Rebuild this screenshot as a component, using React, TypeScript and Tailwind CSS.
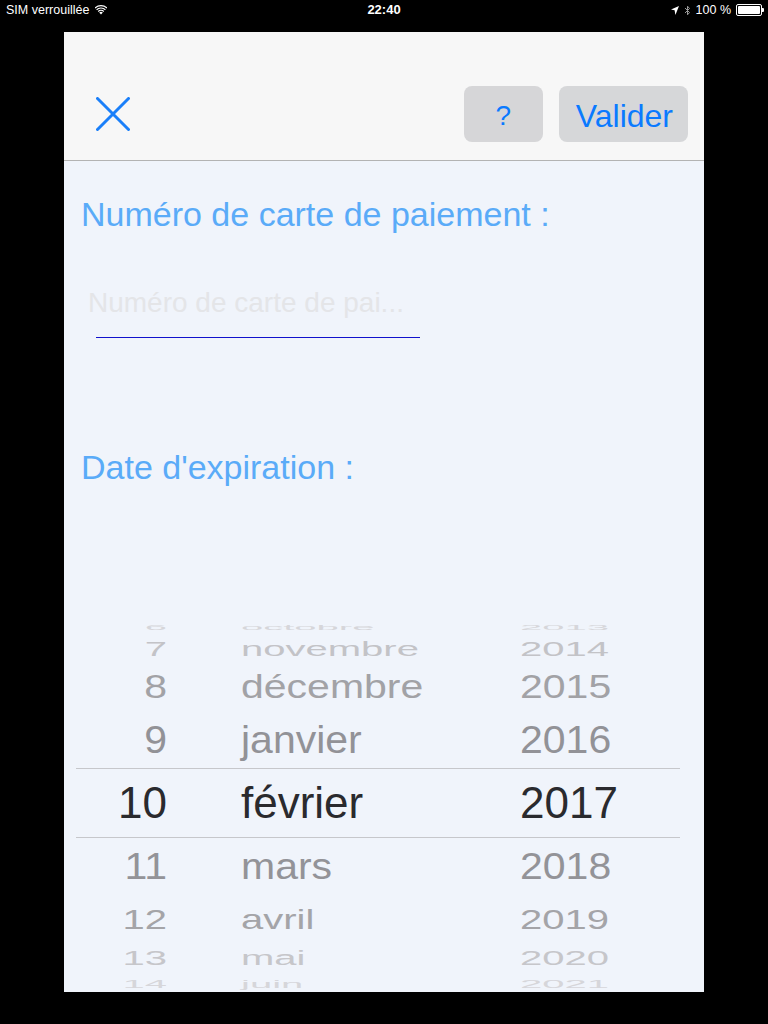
import React from 'react';

type Row = {
  day: string;
  month: string;
  year: string;
  box: string;
  inner: string;
};

// picker wheel rows, squashed towards the edges like the iOS drum
const rows: Row[] = [
  { day: '6', month: 'octobre', year: '2013', box: 'h-[14px]', inner: 'scale-y-[.17] text-[40px] text-[#d6d6da]' },
  { day: '7', month: 'novembre', year: '2014', box: 'h-[27px]', inner: 'scale-y-[.5] text-[40px] text-[#c3c3c7]' },
  { day: '8', month: 'décembre', year: '2015', box: 'h-[50px]', inner: 'scale-y-[.8] text-[41px] text-[#a2a2a6]' },
  { day: '9', month: 'janvier', year: '2016', box: 'h-[56px]', inner: 'scale-y-[.96] text-[41px] text-[#929297]' },
  { day: '10', month: 'février', year: '2017', box: 'h-[70px] border-y border-[#c6c7cb]', inner: 'text-[44px] text-[#2a2a2e]' },
  { day: '11', month: 'mars', year: '2018', box: 'h-[57px]', inner: 'scale-y-[.9] text-[41px] text-[#939398]' },
  { day: '12', month: 'avril', year: '2019', box: 'h-[48px]', inner: 'scale-y-[.7] text-[40px] text-[#a4a4a8]' },
  { day: '13', month: 'mai', year: '2020', box: 'h-[29px]', inner: 'scale-y-[.52] text-[40px] text-[#c6c6ca]' },
  { day: '14', month: 'juin', year: '2021', box: 'h-[24px]', inner: 'scale-y-[.25] text-[40px] text-[#d6d6da]' },
];

const StatusBar: React.FC = () => (
  <div className="h-[20px] shrink-0 flex items-center justify-between pl-[6px] pr-[4px] text-white text-[12.5px] font-['Liberation_Sans',sans-serif] relative">
    <div className="flex items-center gap-[6px]">
      <span>SIM verrouillée</span>
      <svg width="12" height="10" viewBox="0 0 12 10" fill="white">
        <path d="M6 9.5 L4.2 7.5 A2.6 2.6 0 0 1 7.8 7.5 Z" />
        <path d="M2.8 6 A4.6 4.6 0 0 1 9.2 6 L8.4 6.9 A3.4 3.4 0 0 0 3.6 6.9 Z" />
        <path d="M1.2 4.3 A7 7 0 0 1 10.8 4.3 L10 5.2 A5.8 5.8 0 0 0 2 5.2 Z" />
        <path d="M-0.4 2.6 A9.3 9.3 0 0 1 12.4 2.6 L11.6 3.5 A8.1 8.1 0 0 0 0.4 3.5 Z" />
      </svg>
    </div>
    <span className="absolute left-1/2 -translate-x-1/2 font-bold text-[13px]">22:40</span>
    <div className="flex items-center gap-[5px]">
      <svg width="8" height="9" viewBox="0 0 8 9" fill="white">
        <path d="M8 0 L0 3.6 L3.6 4.2 L4.4 9 Z" />
      </svg>
      <svg width="7" height="11" viewBox="0 0 7 11" fill="none" stroke="#9a9a9a" strokeWidth="1">
        <path d="M1 3 L5.5 7.5 L3.5 9.8 L3.5 1.2 L5.5 3.5 L1 8" />
      </svg>
      <span>100 %</span>
      <div className="flex items-center">
        <div className="w-[26px] h-[12px] border border-white rounded-[2px] p-[1px]">
          <div className="w-full h-full bg-white rounded-[1px]" />
        </div>
        <div className="w-[2px] h-[4px] bg-white rounded-r-[1px]" />
      </div>
    </div>
  </div>
);

export default function App() {
  return (
    <div className="w-[768px] h-[1024px] bg-black overflow-hidden font-['Liberation_Sans',sans-serif]">
      <StatusBar />
      <div className="mt-[12px] mx-[64px] h-[960px] flex flex-col overflow-hidden bg-[#f0f4fb]">
        {/* header */}
        <div className="h-[129px] shrink-0 bg-[#f7f7f7] border-b border-[#b3b3b3] pt-[54px] pl-[32px] pr-[16px]">
          <div className="h-[56px] flex items-center justify-between">
            <svg width="34" height="34" viewBox="0 0 34 34" stroke="#1a7ff9" strokeWidth="3" strokeLinecap="round">
              <path d="M1.5 1.5 L32.5 32.5 M32.5 1.5 L1.5 32.5" />
            </svg>
            <div className="flex items-center gap-[16px] h-full">
              <button className="w-[79px] h-full rounded-[8px] bg-[#d6d6d8] text-[#0a7aff] text-[28px] leading-none pt-[3px]">
                ?
              </button>
              <button className="h-full rounded-[8px] bg-[#d6d7d9] text-[#0a7aff] text-[32px] leading-none pl-[17px] pr-[15px] pt-[3px]">
                Valider
              </button>
            </div>
          </div>
        </div>

        {/* body */}
        <div className="flex-1 min-h-0 flex flex-col">
          <p className="shrink-0 mt-[36px] ml-[17px] text-[34px] leading-none text-[#5aabf8]">Numéro de carte de paiement :</p>
          <p className="shrink-0 mt-[58px] ml-[24px] text-[28px] leading-none text-[#e4e5e8]">Numéro de carte de pai...</p>
          <div className="shrink-0 mt-[20px] ml-[32px] w-[324px] h-px bg-[#1111cc]" />
          <p className="shrink-0 mt-[112px] ml-[17px] text-[34px] leading-none text-[#5aabf8]">Date d'expiration :</p>

          {/* expiry picker */}
          <div className="shrink-0 mt-[137px] ml-[12px] mr-[24px] flex flex-col">
            {rows.map((r) => (
              <div key={r.day} className={`${r.box} shrink-0 flex items-center overflow-hidden`}>
                <div className={`${r.inner} w-full flex items-center leading-none`}>
                  <span className="w-[91px] text-right">{r.day}</span>
                  <span className="w-[353px] pl-[74px]">{r.month}</span>
                  <span>{r.year}</span>
                </div>
              </div>
            ))}
          </div>
        </div>
      </div>
    </div>
  );
}
